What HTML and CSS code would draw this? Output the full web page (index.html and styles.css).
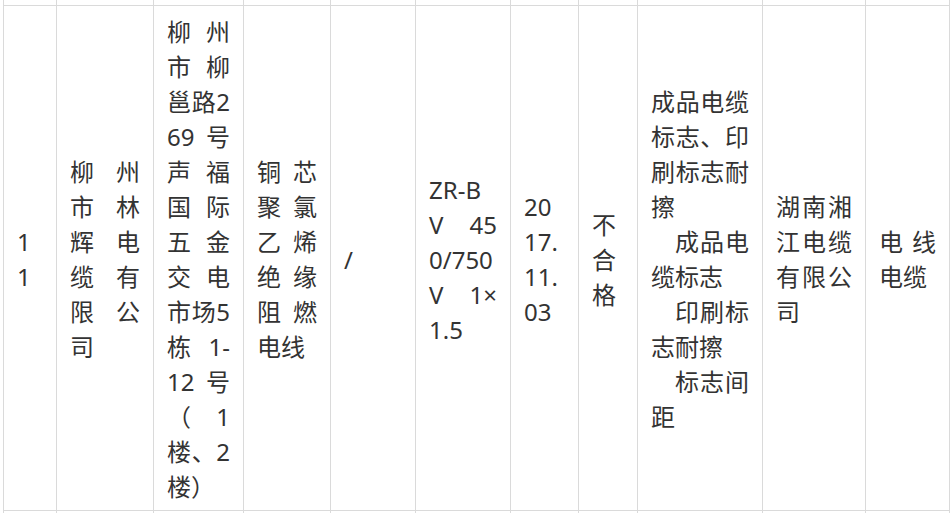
FILE: index.html
```html
<!DOCTYPE html>
<html lang="zh-CN">
<head>
<meta charset="utf-8">
<title>检验结果</title>
<link rel="stylesheet" href="styles.css">
</head>
<body>
<table class="grid">
  <colgroup>
    <col class="c1"><col class="c2"><col class="c3"><col class="c4"><col class="c5"><col class="c6"><col class="c7"><col class="c8"><col class="c9"><col class="c10"><col class="c11">
  </colgroup>
  <tr class="stub top">
    <td></td><td></td><td></td><td></td><td></td><td></td><td></td><td></td><td></td><td></td><td></td>
  </tr>
  <tr class="row">
    <td class="brk">11</td>
    <td>柳州市林辉电缆有限公司</td>
    <td class="lines">
      <span class="l">柳州</span><span class="l">市柳</span><span class="l">邕路2</span><span class="l">69号</span><span class="l">声福</span><span class="l">国际</span><span class="l">五金</span><span class="l">交电</span><span class="l">市场5</span><span class="l">栋 1-</span><span class="l">12号</span><span class="l">（1</span><span class="l">楼、2</span><span class="last">楼）</span>
    </td>
    <td>铜芯聚氯乙烯绝缘阻燃电线</td>
    <td>/</td>
    <td class="lines">
      <span class="last">ZR-B</span><span class="l">V 45</span><span class="last">0/750</span><span class="l">V 1×</span><span class="last">1.5</span>
    </td>
    <td class="lines">
      <span class="last">20</span><span class="last">17.</span><span class="last">11.</span><span class="last">03</span>
    </td>
    <td>不合格</td>
    <td>
      <p class="para">成品电缆标志、印刷标志耐擦</p>
      <p class="para ind">成品电缆标志</p>
      <p class="para ind">印刷标志耐擦</p>
      <p class="para ind">标志间距</p>
    </td>
    <td>湖南湘江电缆有限公司</td>
    <td>电线电缆</td>
  </tr>
  <tr class="stub bottom">
    <td></td><td></td><td></td><td></td><td></td><td></td><td></td><td></td><td></td><td></td><td></td>
  </tr>
</table>
</body>
</html>
```
FILE: styles.css
```css
html, body {
  margin: 0;
  padding: 0;
  background: #ffffff;
  overflow: hidden;
}

body {
  font-family: "Noto Sans", "Noto Sans CJK SC", sans-serif;
  font-size: 24px;
  line-height: 35px;
  color: #333333;
}

.grid {
  border-collapse: collapse;
  table-layout: fixed;
  width: 947px;
  margin-left: 3px;
}

.c1 { width: 53px; }
.c2 { width: 97px; }
.c3 { width: 90px; }
.c4 { width: 87px; }
.c5 { width: 85px; }
.c6 { width: 95px; }
.c7 { width: 68px; }
.c8 { width: 59px; }
.c9 { width: 125px; }
.c10 { width: 103px; }
.c11 { width: 84px; }

.grid td {
  border: 1px solid #dadada;
  padding: 8px 13px 6px 13px;
  vertical-align: middle;
  text-align: justify;
  word-break: normal;
}

.grid .stub td {
  padding: 0;
  line-height: 0;
  font-size: 0;
}

.grid .stub.top td {
  height: 5px;
  border-top: none;
}

.grid .stub.bottom td {
  height: 2px;
  border-bottom: none;
}

.grid td.brk {
  word-break: break-all;
}

.lines .l,
.lines .last {
  display: block;
  white-space: nowrap;
}

.lines .l {
  text-align: justify;
  text-align-last: justify;
}

.lines .last {
  text-align: left;
}

.para {
  margin: 0;
}

.para.ind {
  text-indent: 24px;
}
```
